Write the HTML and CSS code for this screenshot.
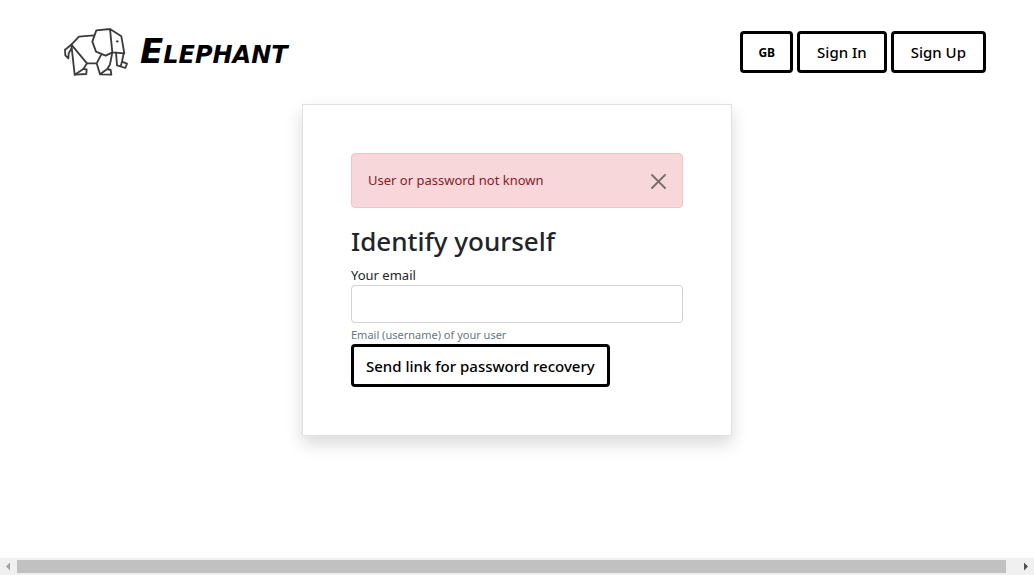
FILE: index.html
```html
<!DOCTYPE html>
<html lang="en">
<head>
<meta charset="utf-8">
<title>Elephant</title>
<link rel="stylesheet" href="styles.css">
</head>
<body>
<header class="topbar">
  <a class="brand" href="#">
    <svg class="brand-logo" viewBox="0 0 240 192" aria-hidden="true">
      <g fill="none" stroke="#3c3c3c" stroke-width="5.500" stroke-linejoin="round" stroke-linecap="round">
        <path d="M113 46L69 50L46 74L56 164L91 162L92 148L82 147M93 130L122 130M132 163L166 164L164 150L154 147M136 103L122 130L132 163L154 147L162 133L169 97L205 100L196 49L162 27L121 31L109 65L120 95L149 107L169 97L162 27"/>
        <path d="M46 74L93 130L82 147L56 164"/>
        <path d="M46 74L27 89L28 106L37 115L38 100L46 86"/>
        <path d="M180 98L183 136L208 144L213 131L198 125L203 100M198 125L194 139"/>
      </g>
      <circle cx="184" cy="64" r="3.500" fill="#3c3c3c"/>
    </svg>
    <span class="brand-name">Elephant</span>
  </a>
  <nav class="actions">
    <button class="btn btn-lang" type="button">GB</button>
    <button class="btn btn-nav" type="button">Sign In</button>
    <button class="btn btn-nav" type="button">Sign Up</button>
  </nav>
</header>
<main class="content">
  <section class="card">
    <div class="alert" role="alert">
      <span>User or password not known</span>
      <button class="close" type="button" aria-label="Close">
        <svg viewBox="0 0 16 16" aria-hidden="true"><path d="M2 2L15 15M15 2L2 15" fill="none" stroke="currentColor" stroke-width="1.800" stroke-linecap="round"/></svg>
      </button>
    </div>
    <h1 class="title">Identify yourself</h1>
    <form class="form">
      <label class="label" for="email">Your email</label>
      <input class="input" id="email" type="email" aria-describedby="email-help">
      <small class="help" id="email-help">Email (username) of your user</small>
      <button class="btn btn-submit" type="submit">Send link for password recovery</button>
    </form>
  </section>
</main>
<div class="scrollbar" aria-hidden="true">
  <svg class="arrow" viewBox="0 0 17 17"><path d="M6 8.500L10 4.500V12.500Z" fill="#a3a3a3"/></svg>
  <div class="thumb"></div>
  <svg class="arrow arrow-end" viewBox="0 0 17 17"><path d="M11 8.500L7 4.500V12.500Z" fill="#505050"/></svg>
</div>
</body>
</html>
```

FILE: styles.css
```css
* {
  box-sizing: border-box;
}

body {
  margin: 0;
  min-height: 100vh;
  display: flex;
  flex-direction: column;
  background: #fff;
  color: #212529;
  font-family: "Segoe UI", "Noto Sans", sans-serif;
  font-size: 13px;
  line-height: 21px;
}

.topbar {
  display: flex;
  align-items: center;
  justify-content: space-between;
  padding: 20px 48px 20px 56px;
}

.brand {
  display: flex;
  align-items: center;
  gap: 4px;
  color: #000;
  text-decoration: none;
}

.brand-logo {
  width: 80px;
  height: 64px;
}

.brand-name {
  padding-bottom: 2px;
  font-family: "Permanent Marker", "DejaVu Sans", sans-serif;
  font-size: 34px;
  font-style: italic;
  font-weight: 700;
  font-variant: small-caps;
  line-height: 40px;
}

.actions {
  display: flex;
  gap: 4px;
}

.btn {
  height: 42px;
  padding: 0 12px;
  border: 3px solid #000;
  border-radius: 4px;
  background: #fff;
  color: #000;
  font-family: inherit;
  font-size: 15px;
  font-weight: 500;
  line-height: 24px;
}

.btn-nav {
  padding: 0 17px;
}

.btn-lang {
  padding: 2px 15px 0;
  font-size: 12px;
  font-weight: 700;
}

.content {
  flex: 1;
  padding: 0 16px 20px;
}

.card {
  max-width: 430px;
  margin: 0 auto;
  padding: 48px;
  border: 1px solid #dee2e6;
  background: #fff;
  box-shadow: 0 8px 16px rgba(0, 0, 0, 0.15);
}

.alert {
  display: flex;
  align-items: center;
  justify-content: space-between;
  padding: 16px;
  border: 1px solid #f5c2c7;
  border-radius: 4px;
  background: #f8d7da;
  color: #842029;
}

.close {
  display: flex;
  padding: 0;
  border: 0;
  background: none;
  color: #000;
  opacity: 0.5;
}

.close svg {
  width: 16px;
  height: 16px;
}

.title {
  margin: 16px 0 8px;
  font-size: 26px;
  font-weight: 500;
  line-height: 34px;
}

.form {
  display: flex;
  flex-direction: column;
  align-items: flex-start;
}

.label {
  line-height: 19px;
}

.input {
  width: 100%;
  height: 38px;
  padding: 6px 12px;
  border: 1px solid #ced4da;
  border-radius: 4px;
  font: inherit;
}

.help {
  margin-top: 3px;
  color: #6c757d;
  font-size: 11px;
  line-height: 18px;
}

.btn-submit {
  height: 43px;
}

.scrollbar {
  display: flex;
  align-items: center;
  height: 17px;
  background: #f0f0f0;
}

.arrow {
  width: 17px;
  height: 17px;
}

.arrow-end {
  margin-left: 11px;
}

.thumb {
  flex: 1;
  height: 13px;
  background: #c1c1c1;
}
```
